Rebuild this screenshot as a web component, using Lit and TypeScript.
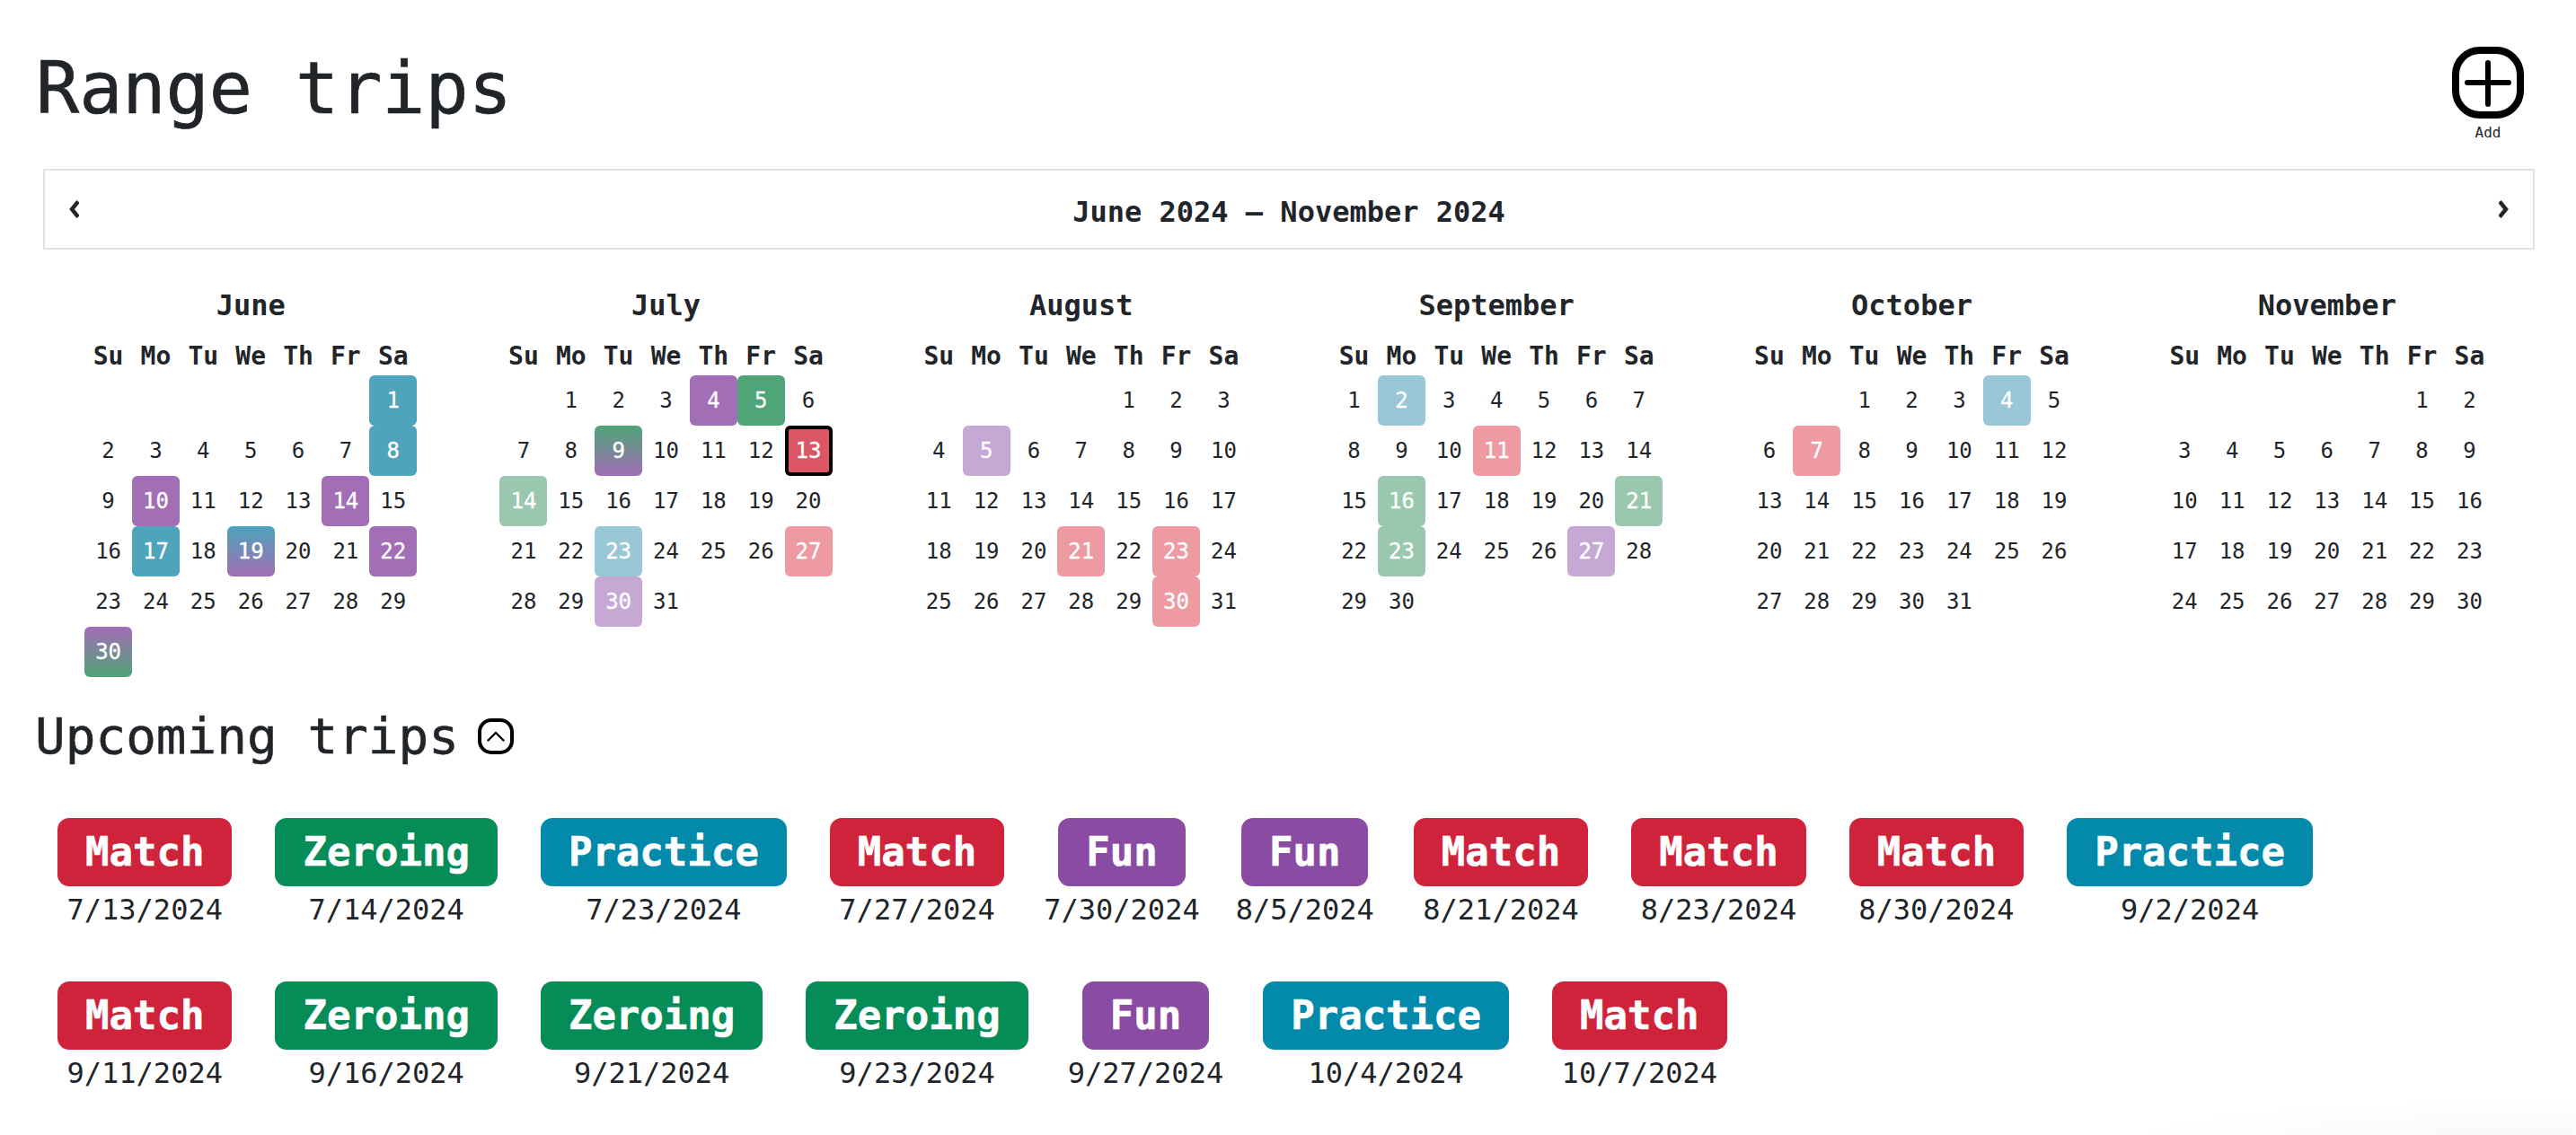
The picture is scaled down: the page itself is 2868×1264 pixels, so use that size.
import { LitElement, html, css, svg } from 'lit';
import { customElement } from 'lit/decorators.js';

type TripType = 'match' | 'zeroing' | 'practice' | 'fun';

interface MonthData {
    name: string;
    offset: number;
    days: number;
    marks: Record<number, string>;
}

const WEEKDAYS = ['Su', 'Mo', 'Tu', 'We', 'Th', 'Fr', 'Sa'];

const MONTHS: MonthData[] = [
    {
        name: 'June', offset: 6, days: 30,
        marks: { 1: 'blue', 8: 'blue', 10: 'purple', 14: 'purple', 17: 'blue', 19: 'blue-purple', 22: 'purple', 30: 'purple-green' },
    },
    {
        name: 'July', offset: 1, days: 31,
        marks: { 4: 'purple', 5: 'green', 9: 'green-purple', 13: 'red selected', 14: 'green-soft', 23: 'blue-soft', 27: 'red-soft', 30: 'purple-soft' },
    },
    {
        name: 'August', offset: 4, days: 31,
        marks: { 5: 'purple-soft', 21: 'red-soft', 23: 'red-soft', 30: 'red-soft' },
    },
    {
        name: 'September', offset: 0, days: 30,
        marks: { 2: 'blue-soft', 11: 'red-soft', 16: 'green-soft', 21: 'green-soft', 23: 'green-soft', 27: 'purple-soft' },
    },
    {
        name: 'October', offset: 2, days: 31,
        marks: { 4: 'blue-soft', 7: 'red-soft' },
    },
    { name: 'November', offset: 5, days: 30, marks: {} },
];

const TRIPS: [TripType, string][] = [
    ['match', '7/13/2024'],
    ['zeroing', '7/14/2024'],
    ['practice', '7/23/2024'],
    ['match', '7/27/2024'],
    ['fun', '7/30/2024'],
    ['fun', '8/5/2024'],
    ['match', '8/21/2024'],
    ['match', '8/23/2024'],
    ['match', '8/30/2024'],
    ['practice', '9/2/2024'],
    ['match', '9/11/2024'],
    ['zeroing', '9/16/2024'],
    ['zeroing', '9/21/2024'],
    ['zeroing', '9/23/2024'],
    ['fun', '9/27/2024'],
    ['practice', '10/4/2024'],
    ['match', '10/7/2024'],
];

const LABELS: Record<TripType, string> = { match: 'Match', zeroing: 'Zeroing', practice: 'Practice', fun: 'Fun' };

const chevron = (points: string) => html`
    <svg class="chevron" viewBox="0 0 11 20">${svg`<polyline points=${points} fill="none" stroke="currentColor" stroke-width="4.4" stroke-linejoin="miter"></polyline>`}</svg>
`;

@customElement('app-root')
export class AppRoot extends LitElement {
    static styles = css`
        :host {
            display: block;
            min-height: 1264px;
            box-sizing: border-box;
            color: #212529;
            font-family: "DejaVu Sans Mono", monospace;
            background: radial-gradient(ellipse 420px 44px at 2790px 1270px, #f8f8f8, #ffffff 100%);
            overflow: hidden;
        }

        .header {
            display: flex;
            justify-content: space-between;
            align-items: flex-start;
            height: 188px;
            padding: 0 58px 0 40px;
        }

        h1 {
            margin: 51px 0 0;
            font-size: 80px;
            font-weight: 400;
            line-height: 96px;
            -webkit-text-stroke: 0.7px #212529;
        }

        .add {
            display: flex;
            flex-direction: column;
            align-items: center;
            margin-top: 52px;
            font-size: 16px;
            line-height: 24px;
        }

        .add svg {
            display: block;
            width: 80px;
            height: 80px;
            margin-bottom: 4px;
        }

        .nav {
            display: flex;
            justify-content: space-between;
            align-items: center;
            box-sizing: border-box;
            height: 90px;
            margin: 0 46px 0 48px;
            padding: 0 27px;
            border: 2px solid #dee2e6;
            font-size: 32px;
            font-weight: 700;
        }

        .nav span {
            padding-top: 6px;
        }

        .chevron {
            display: block;
            width: 11px;
            height: 20px;
            color: #212529;
        }

        .months {
            display: grid;
            grid-template-columns: repeat(6, 1fr);
            margin: 0 46px 0 48px;
        }

        .month {
            display: flex;
            flex-direction: column;
            align-items: center;
        }

        .month-name {
            margin-top: 38px;
            font-size: 32px;
            font-weight: 700;
            line-height: 48px;
        }

        .grid {
            display: grid;
            grid-template-columns: repeat(7, 52.86px);
            grid-auto-rows: 56px;
            margin-top: 1px;
        }

        .weekday {
            display: flex;
            align-items: center;
            justify-content: center;
            height: 42px;
            font-size: 28px;
            font-weight: 700;
        }

        .weekdays {
            display: grid;
            grid-template-columns: repeat(7, 52.86px);
            margin-top: 11px;
        }

        .day {
            display: flex;
            align-items: center;
            justify-content: center;
            padding-bottom: 1px;
            box-sizing: border-box;
            border-radius: 6px;
            font-size: 24px;
        }

        .day.marked {
            color: #ffffff;
            -webkit-text-stroke: 0.3px #ffffff;
        }
        .blue { background: #4ea3bd; }
        .purple { background: #a26eb5; }
        .green { background: #4fa478; }
        .red { background: #dc5766; }
        .blue-soft { background: #99c7d6; }
        .purple-soft { background: #c6a8d5; }
        .green-soft { background: #99c8af; }
        .red-soft { background: #ed9aa2; }
        .blue-purple { background: linear-gradient(#4ea3bd, #a26eb5); }
        .purple-green { background: linear-gradient(#a26eb5, #4fa478); }
        .green-purple { background: linear-gradient(#4fa478, #a26eb5); }

        .selected {
            outline: 4px solid #000000;
            outline-offset: -4px;
        }

        .upcoming {
            display: flex;
            align-items: center;
            gap: 21px;
            margin: 30px 0 0;
            padding-left: 39px;
            font-size: 56px;
            font-weight: 400;
            line-height: 72px;
        }

        .upcoming span {
            -webkit-text-stroke: 0.5px #212529;
        }

        .upcoming svg {
            display: block;
            width: 40px;
            height: 40px;
        }

        .trips {
            display: flex;
            flex-wrap: wrap;
            column-gap: 40px;
            row-gap: 56px;
            margin-top: 55px;
            padding: 0 68px 0 60px;
        }

        .trip {
            display: flex;
            flex-direction: column;
            align-items: center;
            font-size: 32px;
            line-height: 48px;
        }

        .date {
            margin-top: 2px;
        }

        .badge {
            margin: 0 4px;
            padding: 0 31px;
            height: 76px;
            border-radius: 13px;
            color: #ffffff;
            font-size: 44px;
            font-weight: 700;
            line-height: 76px;
            -webkit-text-stroke: 0.6px #ffffff;
        }

        .badge.match { background: #cf233b; }
        .badge.zeroing { background: #058c57; }
        .badge.practice { background: #0389aa; }
        .badge.fun { background: #8a4ba2; }
    `;

    renderMonth(month: MonthData) {
        const blanks = Array.from({ length: month.offset });
        const days = Array.from({ length: month.days }, (_, i) => i + 1);
        return html`
            <div class="month">
                <div class="month-name">${month.name}</div>
                <div class="weekdays">
                    ${WEEKDAYS.map((d) => html`<div class="weekday">${d}</div>`)}
                </div>
                <div class="grid">
                    ${blanks.map(() => html`<div></div>`)}
                    ${days.map((d) => {
                        const mark = month.marks[d];
                        return html`<div class="day ${mark ? `marked ${mark}` : ''}">${d}</div>`;
                    })}
                </div>
            </div>
        `;
    }

    render() {
        return html`
            <div class="header">
                <h1>Range trips</h1>
                <div class="add">
                    <svg viewBox="0 0 80 80" fill="none" stroke="#000" stroke-linecap="round">
                        <rect x="4" y="4" width="72" height="72" rx="27" stroke-width="8"></rect>
                        <path d="M40 18v46M17 40h46" stroke-width="6"></path>
                    </svg>
                    <span>Add</span>
                </div>
            </div>
            <div class="nav">
                ${chevron('10,1.5 3,10 10,18.5')}
                <span>June 2024 – November 2024</span>
                ${chevron('1,1.5 8,10 1,18.5')}
            </div>
            <div class="months">${MONTHS.map((m) => this.renderMonth(m))}</div>
            <h2 class="upcoming">
                <span>Upcoming trips</span>
                <svg viewBox="0 0 40 40" fill="none" stroke="#000" stroke-linecap="round" stroke-linejoin="round">
                    <rect x="2" y="2" width="36" height="36" rx="13" stroke-width="4"></rect>
                    <path d="M11.5 24.5L20 16L28.5 24.5" stroke-width="2.4"></path>
                </svg>
            </h2>
            <div class="trips">
                ${TRIPS.map(([type, date]) => html`
                    <div class="trip">
                        <div class="badge ${type}">${LABELS[type]}</div>
                        <div class="date">${date}</div>
                    </div>
                `)}
            </div>
        `;
    }
}
